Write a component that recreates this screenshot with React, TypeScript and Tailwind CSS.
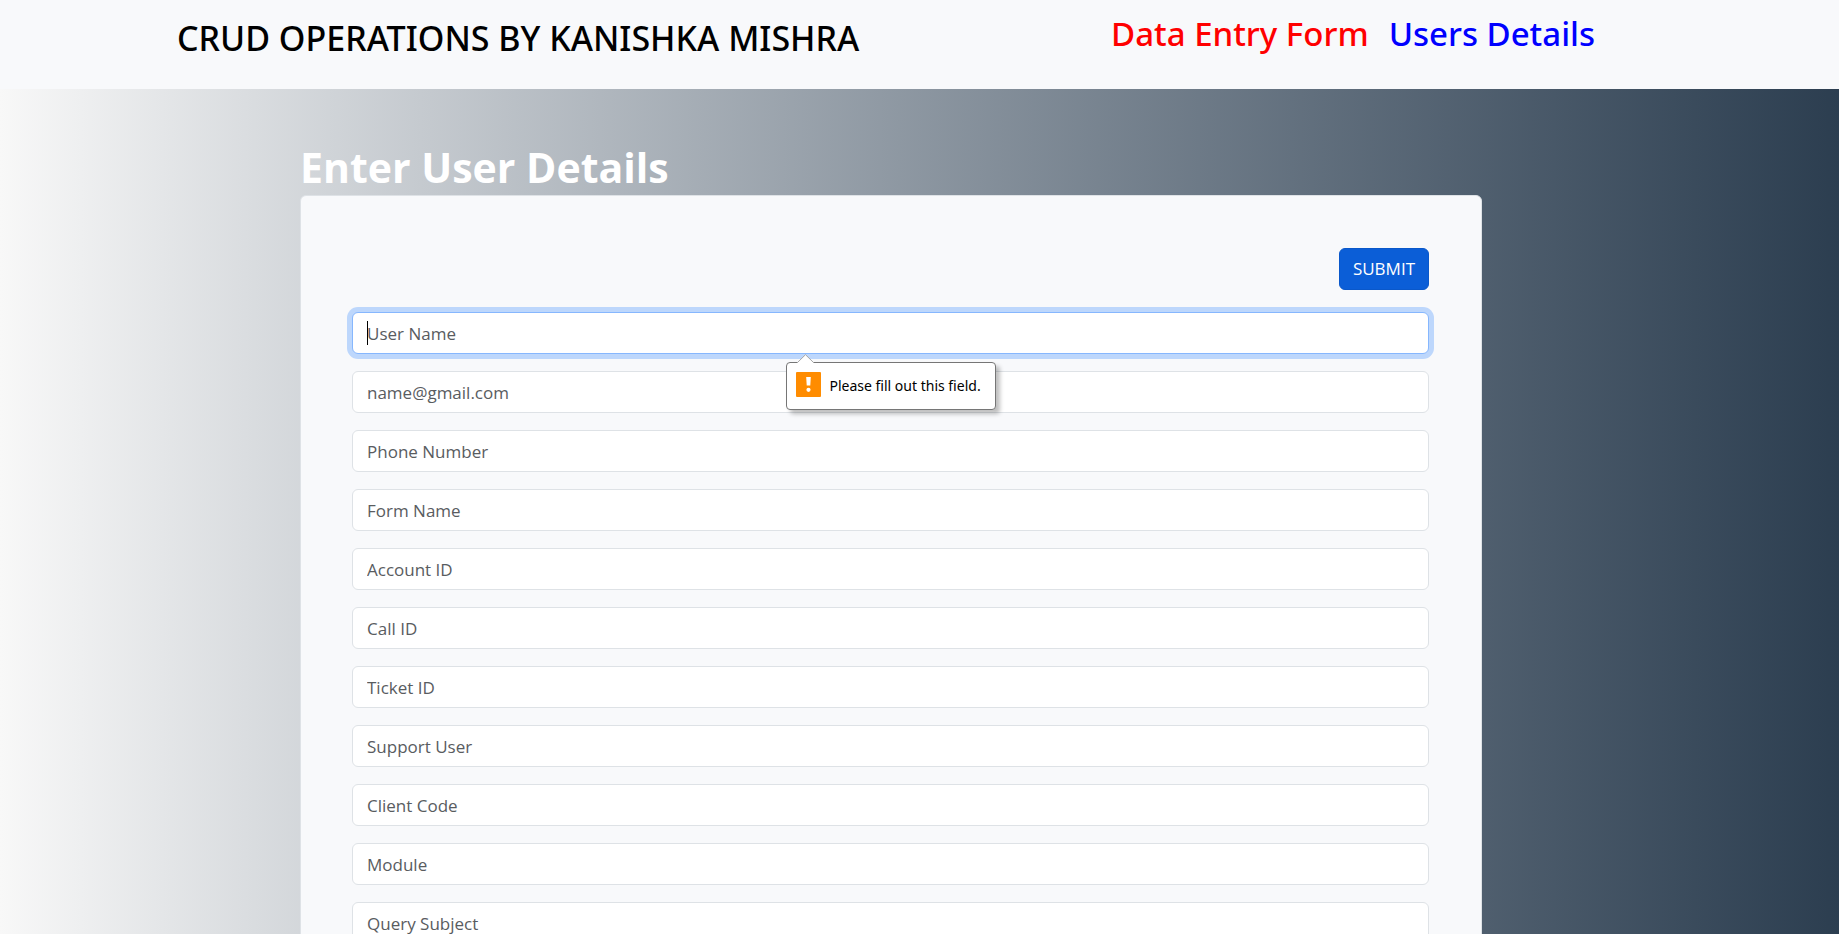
const fields = [
  { id: "user-name", label: "User Name", type: "text" },
  { id: "email", label: "name@gmail.com", type: "email" },
  { id: "phone", label: "Phone Number", type: "tel" },
  { id: "form-name", label: "Form Name", type: "text" },
  { id: "account-id", label: "Account ID", type: "text" },
  { id: "call-id", label: "Call ID", type: "text" },
  { id: "ticket-id", label: "Ticket ID", type: "text" },
  { id: "support-user", label: "Support User", type: "text" },
  { id: "client-code", label: "Client Code", type: "text" },
  { id: "module", label: "Module", type: "text" },
  { id: "query-subject", label: "Query Subject", type: "text" },
];

function Header() {
  return (
    <header className="flex h-[89px] shrink-0 items-start justify-between bg-[#f8f9fb] pr-[244px] pl-[177px] font-['Noto_Sans','Open_Sans',sans-serif]">
      <h1 className="pt-4 text-[34px] leading-[44px] font-medium whitespace-nowrap text-black">
        CRUD OPERATIONS BY KANISHKA MISHRA
      </h1>
      <nav className="flex gap-5 pt-3 text-[33px] leading-[44px] font-medium whitespace-nowrap">
        <a href="#entry" className="text-[#ff0000]">Data Entry Form</a>
        <a href="#users" className="text-[#0000ff]">Users Details</a>
      </nav>
    </header>
  );
}

function ValidationBubble() {
  return (
    <div
      role="alert"
      className="absolute top-[50px] left-1/2 z-10 flex h-12 w-[210px] -translate-x-1/2 gap-[9px] rounded-[4px] border border-[#767676] bg-white pt-[9px] pl-[9px] shadow-[4px_4px_4px_rgba(0,0,0,0.25)]"
    >
      <svg className="absolute -top-[9px] left-[10px]" width="17" height="10" viewBox="0 0 17 10">
        <path d="M0.5 8.5 L8.5 0.7 L16.5 8.5 V10 H0.5 Z" fill="#fff" />
        <path d="M0.5 8.5 L8.5 0.7 L16.5 8.5" fill="none" stroke="#a6a6a6" />
      </svg>
      <svg className="shrink-0" width="25" height="25" viewBox="0 0 25 25">
        <rect width="25" height="25" rx="1" fill="#ff8c00" />
        <path d="M10.2 5h4.6l-.5 8.6h-3.6z" fill="#fff" />
        <circle cx="12.5" cy="17.8" r="2.1" fill="#fff" />
      </svg>
      <span className="pt-1 text-sm leading-5 whitespace-nowrap text-black font-['Noto_Sans','Open_Sans',sans-serif]">
        Please fill out this field.
      </span>
    </div>
  );
}

export default function App() {
  return (
    <div className="flex h-screen flex-col overflow-hidden bg-linear-to-r from-[#f8f8f8] to-[#2c3e50] font-['Open_Sans','Noto_Sans',sans-serif]">
      <Header />
      <main className="mt-[50px] mr-[357px] ml-[300px]">
        <h2 className="text-[41px] leading-[56px] font-bold text-white">Enter User Details</h2>
        <form
          noValidate
          className="flex flex-col gap-[17px] rounded-[6px] border border-[#dee2e6] bg-[#f8f9fb] pr-[52px] pl-[51px] pt-[52px] pb-[52px]"
        >
          <div className="mb-[5px] flex justify-end">
            <button
              type="submit"
              className="h-[42px] rounded-[6px] border border-[#0a58ca] bg-[#0b5ed7] px-[13px] text-[17px] text-white"
            >
              SUBMIT
            </button>
          </div>
          {fields.map((field, i) => (
            <div key={field.id} className="relative">
              <input
                id={field.id}
                name={field.id}
                type={field.type}
                aria-label={field.label}
                placeholder={field.label}
                required
                className={
                  "block h-[42px] w-full rounded-[6px] border bg-white px-[14px] text-[17px] text-[#212529] outline-none placeholder:text-[#595c5f] placeholder:opacity-100 " +
                  (i === 0
                    ? "border-[#86b7fe] shadow-[0_0_0_5px_#bdd7fc]"
                    : "border-[#dee2e6]")
                }
              />
              {i === 0 && (
                <>
                  <span className="absolute top-[9px] left-[15px] h-6 w-px bg-black" />
                  <ValidationBubble />
                </>
              )}
            </div>
          ))}
        </form>
      </main>
    </div>
  );
}
